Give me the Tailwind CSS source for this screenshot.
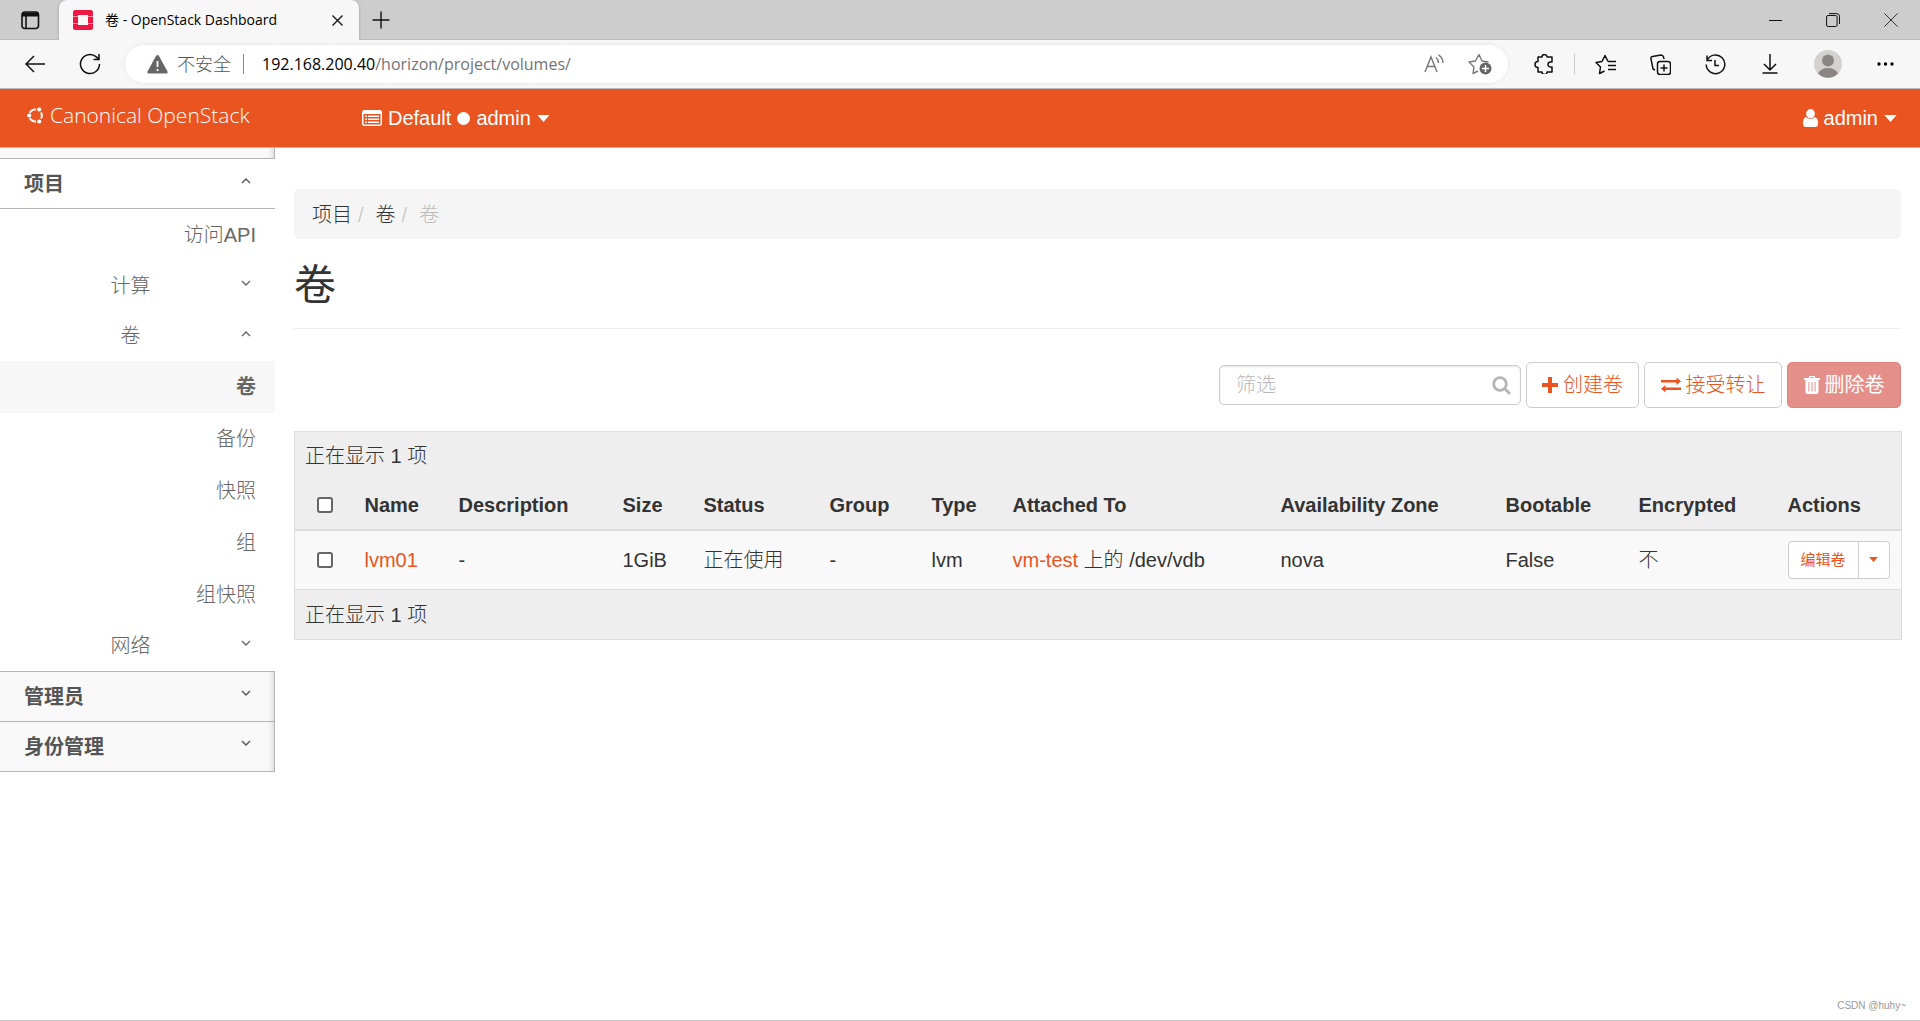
<!DOCTYPE html>
<html lang="zh-CN">
<head>
<meta charset="utf-8">
<meta name="viewport" content="width=device-width, initial-scale=1">
<title>卷 - OpenStack Dashboard</title>
<script src="https://cdn.jsdelivr.net/npm/@tailwindcss/browser@4"></script>
</head>
<body class="flex min-h-screen flex-col border-b border-[#c8c8c8] bg-white font-['Liberation_Sans','Noto_Sans_CJK_SC',sans-serif] text-xl font-light text-[#333]">

<!-- Shared symbols -->
<svg class="hidden" aria-hidden="true">
  <symbol id="caret" viewBox="0 0 14 8"><path d="M0 0h14L7 8z" fill="currentColor"/></symbol>
  <symbol id="down" viewBox="0 0 10 7"><path d="M1 1l4 4 4-4" fill="none" stroke="currentColor" stroke-width="1.4"/></symbol>
  <symbol id="up" viewBox="0 0 10 7"><path d="M1 6l4-4 4 4" fill="none" stroke="currentColor" stroke-width="1.4"/></symbol>
</svg>

<!-- Browser chrome -->
<div class="font-['Open_Sans','Noto_Sans_CJK_SC',sans-serif] font-normal text-black">
  <div class="flex h-10 items-center bg-[#cdcdcd]">
    <button class="flex h-10 w-[59px] items-center justify-center border-b border-[#bdbdbd]" aria-label="标签页操作菜单">
      <svg class="size-5" viewBox="0 0 20 20" fill="none" stroke="#111" stroke-width="1.6"><rect x="2" y="2" width="16.500" height="16.500" rx="3"/><path d="M2 4.500h16.500" stroke-width="4"/><path d="M6 6v12"/></svg>
    </button>
    <div class="flex h-10 w-[300px] items-center rounded-t-lg bg-[#f7f7f7] pr-3 pl-[14px] shadow-[0_0_3px_rgba(0,0,0,0.25)] [clip-path:inset(0_-4px_0_-4px)]">
      <svg class="size-5" viewBox="0 0 20 20"><path fill="#ed1944" d="M1.500 0h17L20 1.500V6h-5V5H5v1H0V1.500zM0 7h5v6H0zM15 7h5v6h-5zM0 14h5v1h10v-1h5v4.500L18.500 20h-17L0 18.500z"/><path fill="#f58aa0" d="M0 6h5v1H0zM15 6h5v1h-5zM0 13h5v1H0zM15 13h5v1h-5z"/></svg>
      <span class="ml-3 flex-1 text-sm whitespace-nowrap">卷 - OpenStack Dashboard</span>
      <button class="flex size-5 items-center justify-center" aria-label="关闭标签页"><svg class="size-[11px]" viewBox="0 0 11 11" stroke="#111" stroke-width="1.300"><path d="M.5.5l10 10M10.500.5l-10 10"/></svg></button>
    </div>
    <div class="flex h-10 flex-1 items-center justify-between border-b border-[#bdbdbd]">
      <button class="ml-3 p-px" aria-label="新建标签页"><svg class="size-[18px]" viewBox="0 0 18 18" stroke="#111" stroke-width="1.400"><path d="M9 .5v17M.5 9h17"/></svg></button>
      <div class="flex items-center gap-[44px] pr-[22px]">
        <button aria-label="最小化"><svg class="size-[14px]" viewBox="0 0 14 14" stroke="#111"><path d="M1 7.500h13"/></svg></button>
        <button aria-label="还原"><svg class="size-[14px]" viewBox="0 0 14 14" fill="none" stroke="#111"><rect x=".6" y="2.500" width="10.500" height="11" rx="1.500"/><path d="M3 .6h7.500a3 3 0 013 3V11"/></svg></button>
        <button aria-label="关闭"><svg class="size-[14px]" viewBox="0 0 14 14" stroke="#333"><path d="M.5.5l13 13M13.500.5l-13 13"/></svg></button>
      </div>
    </div>
  </div>
  <div class="flex h-[49px] items-center border-b border-[#b9b9b9] bg-[#f7f7f7] pl-[25px]">
    <button aria-label="返回"><svg class="h-[18px] w-[21px]" viewBox="0 0 21 18" fill="none" stroke="#111" stroke-width="1.500"><path d="M20 9H1M9 1L1 9l8 8"/></svg></button>
    <button class="ml-[33px]" aria-label="刷新"><svg class="size-[22px]" viewBox="0 0 22 22" fill="none" stroke="#111" stroke-width="1.500"><path d="M20.500 11a9.500 9.500 0 11-3.200-7.100L19.500 6M20 1v5.500h-5.500"/></svg></button>
    <div class="ml-6 flex h-[38px] flex-1 items-center rounded-full bg-white pr-4 pl-[22px] shadow-[0_0_4px_rgba(0,0,0,0.08)]">
      <svg class="h-[19px] w-[21px]" viewBox="0 0 21 19"><path fill="#666" d="M9 1q1.500-2 3 0l8.500 15.500q.6 2-1.200 2H1.700q-1.800 0-1.200-2z"/><path stroke="#fff" stroke-width="1.800" d="M10.500 6v6M10.500 14v2"/></svg>
      <span class="ml-[9px] text-lg font-light text-[#555]">不安全</span>
      <span class="ml-3 h-5 w-px bg-[#888]"></span>
      <span class="ml-[18px] flex-1 text-base">192.168.200.40<span class="text-[#747474]">/horizon/project/volumes/</span></span>
      <button aria-label="朗读此页内容"><svg class="size-5" viewBox="0 0 20 20" fill="none" stroke="#777" stroke-width="1.400"><path d="M1 18L7 3l6 15M3.300 12.500h7.400M12 3.500a7 7 0 012.500 5.500M14.500.8A10 10 0 0119 9"/></svg></button>
      <button class="ml-6" aria-label="收藏此页"><svg class="h-[22px] w-6" viewBox="0 0 24 22" fill="none"><path d="M10 18l-5 2.500 1-6.500-5-5 6.500-1L11 1.500 14 8l6.500 1" stroke="#777" stroke-width="1.400" stroke-linejoin="round"/><circle cx="17.500" cy="15.500" r="6" fill="#666"/><path d="M17.500 12v7M14 15.500h7" stroke="#fff" stroke-width="1.500"/></svg></button>
    </div>
    <div class="flex items-center pr-[26px] pl-[26px]">
      <button aria-label="扩展"><svg class="size-5" viewBox="0 0 20 20" fill="none" stroke="#111" stroke-width="1.500" stroke-linejoin="round"><path d="M4 3h4a2.500 2.500 0 015 0h5v5h-1.500a2.500 2.500 0 000 5H18v5h-5a2.500 2.500 0 01-5 0H4v-4.500a2.700 2.700 0 010-6z"/></svg></button>
      <span class="ml-5 h-5 w-px bg-[#c8c8c8]"></span>
      <button class="ml-5" aria-label="收藏夹"><svg class="size-[21px]" viewBox="0 0 21 21" fill="none" stroke="#111" stroke-width="1.500" stroke-linejoin="round"><path d="M9.500 17L4.500 19.500l1-6.500L1 8.500 7 7.500 10 1.500l3 6M13 7.500h8M13 11.500h8M13 15.500h8"/></svg></button>
      <button class="ml-[34px]" aria-label="集锦"><svg class="size-[21px]" viewBox="0 0 21 21" fill="none" stroke="#111" stroke-width="1.500"><rect x="7.500" y="7.500" width="13" height="13" rx="2.500"/><path d="M14 10.500v7M10.500 14h7M5 16l-2-1L1 5q-.5-2 1.500-2.500L11 1q2 0 2.500 2l.5 2"/></svg></button>
      <button class="ml-[34px]" aria-label="历史记录"><svg class="size-[21px]" viewBox="0 0 21 21" fill="none" stroke="#111" stroke-width="1.500"><path d="M2 6.500a9.300 9.300 0 11-.8 4M2 1.500v5h5M10 6v5.500h4"/></svg></button>
      <button class="ml-[36px]" aria-label="下载"><svg class="h-5 w-4" viewBox="0 0 16 20" fill="none" stroke="#111" stroke-width="1.500"><path d="M8 0v16M2 10l6 6 6-6M.5 19h15"/></svg></button>
      <button class="ml-9" aria-label="个人"><svg class="size-7" viewBox="0 0 28 28"><circle cx="14" cy="14" r="14" fill="#d4d2cf"/><circle cx="14" cy="10.500" r="6" fill="#8b8683"/><path fill="#8b8683" d="M4 23.500q3-5.500 10-5.500t10 5.500A14 14 0 014 23.500z"/></svg></button>
      <button class="ml-[35px]" aria-label="设置及其他"><svg class="h-1 w-[17px]" viewBox="0 0 17 4"><circle cx="2" cy="2" r="1.700"/><circle cx="8.500" cy="2" r="1.700"/><circle cx="15" cy="2" r="1.700"/></svg></button>
    </div>
  </div>
</div>

<!-- Dashboard top bar -->
<header class="flex h-[59px] items-center justify-between border-b border-[#bbb] bg-[#e95420] text-white">
  <div class="flex items-center">
    <a href="#" class="flex w-[335px] items-center gap-[6px] pb-[6px] pl-[27px] font-['Open_Sans',sans-serif] text-[21px] leading-7 whitespace-nowrap">
      <svg class="size-[17px]" viewBox="0 0 17 17" fill="none" stroke="#fff" stroke-width="2"><path d="M4 4.200A6 6 0 019 2.600M14 5.500a6 6 0 010 6M4 12.800a6 6 0 005 1.600"/><path d="M4 4.200A6 6 0 003 6M4 12.800A6 6 0 013 11"/><g fill="#fff" stroke="none"><circle cx="2.200" cy="8.500" r="2.100"/><circle cx="12.200" cy="2.500" r="2.100"/><circle cx="12.200" cy="14.500" r="2.100"/></g></svg>
      Canonical OpenStack
    </a>
    <button class="flex items-center gap-[6px] pl-[27px]">
      <svg class="h-4 w-5" viewBox="0 0 20 16"><path fill="#fff" fill-rule="evenodd" d="M1.500 0h17L20 1.500v13L18.500 16h-17L0 14.500v-13zM1.500 4v10.500h17V4z"/><path stroke="#fff" stroke-width="1.400" d="M3 6.300h2M6 6.300h11M3 9.300h2M6 9.300h11M3 12.300h2M6 12.300h11"/></svg>
      Default
      <span class="size-[13px] rounded-full bg-white"></span>
      admin
      <svg class="h-[7px] w-[13px]"><use href="#caret"/></svg>
    </button>
  </div>
  <button class="flex items-center gap-[6px] pr-[23px]">
    <svg class="h-[18px] w-[15px]" viewBox="0 0 15 18" fill="#fff"><ellipse cx="7.500" cy="4.700" rx="4.400" ry="4.700"/><path d="M3 8q4.500 4 9 0 3 1 3 6.500Q15 18 12 18H3q-3 0-3-3.500Q0 9 3 8z"/></svg>
    admin
    <svg class="h-[7px] w-[13px]"><use href="#caret"/></svg>
  </button>
</header>

<div class="flex flex-1 items-start">
  <!-- Side navigation -->
  <nav class="w-[275px] shrink-0 text-[#666]">
    <div class="h-[11px] border-r border-b border-[#b5b5b5] bg-[#f9f9f9] shadow-[inset_-5px_0_5px_-3px_rgba(0,0,0,0.12)]"></div>
    <a href="#" class="flex h-[50px] items-center justify-between border-b border-[#b5b5b5] pr-6 pl-6 font-bold text-[#555]">项目<svg class="mb-[6px] h-[7px] w-[10px]"><use href="#up"/></svg></a>
    <a href="#" class="flex h-[52px] items-center justify-end pr-[19px]">访问API</a>
    <a href="#" class="grid h-[50px] grid-cols-[1fr_40px_1fr] items-center pr-6 pl-[10px]"><span class="col-start-2 text-center">计算</span><svg class="mb-[6px] h-[7px] w-[10px] justify-self-end"><use href="#down"/></svg></a>
    <a href="#" class="grid h-[50px] grid-cols-[1fr_40px_1fr] items-center pr-6 pl-[10px]"><span class="col-start-2 text-center">卷</span><svg class="mb-[6px] h-[7px] w-[10px] justify-self-end"><use href="#up"/></svg></a>
    <a href="#" class="flex h-[52px] items-center justify-end bg-[#f7f7f7] pr-[19px] font-bold">卷</a>
    <a href="#" class="flex h-[52px] items-center justify-end pr-[19px]">备份</a>
    <a href="#" class="flex h-[52px] items-center justify-end pr-[19px]">快照</a>
    <a href="#" class="flex h-[52px] items-center justify-end pr-[19px]">组</a>
    <a href="#" class="flex h-[52px] items-center justify-end pr-[19px]">组快照</a>
    <a href="#" class="grid h-[50px] grid-cols-[1fr_40px_1fr] items-center pr-6 pl-[10px]"><span class="col-start-2 text-center">网络</span><svg class="mb-[6px] h-[7px] w-[10px] justify-self-end"><use href="#down"/></svg></a>
    <a href="#" class="flex h-[50px] items-center justify-between border-t border-r border-[#b5b5b5] bg-[#f9f9f9] pr-[23px] pl-6 font-bold text-[#555] shadow-[inset_-5px_0_5px_-3px_rgba(0,0,0,0.12)]">管理员<svg class="mb-[6px] h-[7px] w-[10px]"><use href="#down"/></svg></a>
    <a href="#" class="flex h-[51px] items-center justify-between border-y border-r border-[#b5b5b5] bg-[#f9f9f9] pr-[23px] pl-6 font-bold text-[#555] shadow-[inset_-5px_0_5px_-3px_rgba(0,0,0,0.12)]">身份管理<svg class="mb-[6px] h-[7px] w-[10px]"><use href="#down"/></svg></a>
  </nav>

  <main class="min-w-0 flex-1 pt-[41px] pr-[19px] pl-[19px]">
    <ol class="flex h-[50px] items-center rounded-[5px] bg-[#f5f5f5] px-[18px] pt-[2px]">
      <li><a href="#">项目</a><span class="pr-3 pl-[6px] text-[#ccc]">/</span></li>
      <li><a href="#">卷</a><span class="pr-3 pl-[6px] text-[#ccc]">/</span></li>
      <li class="text-[#bbb]">卷</li>
    </ol>
    <h1 class="mt-[22px] border-b border-[#eee] pb-[18px] text-[42px] leading-[49px] font-normal">卷</h1>

    <div class="mt-[33px] flex items-center justify-end gap-[5px] text-[#e95420]">
      <div class="relative flex w-[302px] items-center">
        <input type="text" aria-label="筛选" placeholder="筛选" class="h-10 w-full rounded-[5px] border border-[#ccc] bg-white pr-10 pl-4 shadow-[inset_0_1px_2px_rgba(0,0,0,0.1)] placeholder:text-[#b8b8b8]">
        <svg class="absolute right-[10px] size-[19px]" viewBox="0 0 19 19" fill="none" stroke="#b5b5b5" stroke-width="2.800"><circle cx="8" cy="8" r="6.300"/><path d="M12.500 12.500l5.500 5.500"/></svg>
      </div>
      <button class="flex h-[46px] w-[113px] items-center justify-center gap-[5px] rounded-[5px] border border-[#ccc] bg-white"><svg class="size-4" viewBox="0 0 16 16" stroke="currentColor" stroke-width="4"><path d="M8 0v16M0 8h16"/></svg>创建卷</button>
      <button class="flex h-[46px] w-[138px] items-center justify-center gap-[5px] rounded-[5px] border border-[#ccc] bg-white"><svg class="h-4 w-5" viewBox="0 0 20 16" fill="currentColor"><path d="M0 3h15.500V0.500L20 4.300l-4.500 3.800V5.600H0zM20 10.400H4.500V7.900L0 11.700l4.500 3.800V13H20z"/></svg>接受转让</button>
      <button class="flex h-[46px] w-[114px] items-center justify-center gap-[5px] rounded-[5px] border border-[#e08480] bg-[#e58f8b] font-normal text-white" disabled><svg class="h-[18px] w-4" viewBox="0 0 16 18" fill="#fff"><path fill-rule="evenodd" d="M4.500 2l1-2h5l1 2H16v2h-1.500v12q0 2-2 2h-9q-2 0-2-2V4H0V2zM6.300 2h3.400l-.5-1H6.800zM4.400 6v9.500h1V6zm3.100 0v9.500h1V6zm3.100 0v9.500h1V6z"/></svg>删除卷</button>
    </div>

    <table class="mt-[23px] w-full table-fixed border-collapse border border-[#ddd] text-left">
      <colgroup>
        <col class="w-[60px]"><col class="w-[94px]"><col class="w-[164px]"><col class="w-[81px]"><col class="w-[126px]"><col class="w-[102px]"><col class="w-[81px]"><col class="w-[268px]"><col class="w-[225px]"><col class="w-[133px]"><col class="w-[149px]"><col class="w-[124px]">
      </colgroup>
      <thead class="bg-[#eee]">
        <tr class="h-[49px]"><td colspan="12" class="px-[10px]">正在显示 1 项</td></tr>
        <tr class="h-[49px] border-b-2 border-[#ddd] whitespace-nowrap">
          <th class="pl-[22px]"><input type="checkbox" aria-label="全选" class="block size-4 appearance-none rounded-[3px] border-2 border-[#666] bg-white"></th>
          <th class="px-[10px]">Name</th><th class="px-[10px]">Description</th><th class="px-[10px]">Size</th><th class="px-[10px]">Status</th><th class="px-[10px]">Group</th><th class="px-[10px]">Type</th><th class="px-[10px]">Attached To</th><th class="px-[10px]">Availability Zone</th><th class="px-[10px]">Bootable</th><th class="px-[10px]">Encrypted</th><th class="px-[10px]">Actions</th>
        </tr>
      </thead>
      <tbody class="bg-[#f9f9f9]">
        <tr class="h-[60px] border-b border-[#ddd] whitespace-nowrap">
          <td class="pl-[22px]"><input type="checkbox" aria-label="选择 lvm01" class="block size-4 appearance-none rounded-[3px] border-2 border-[#666] bg-white"></td>
          <td class="px-[10px]"><a href="#" class="text-[#e95420]">lvm01</a></td>
          <td class="px-[10px]">-</td><td class="px-[10px]">1GiB</td><td class="px-[10px]">正在使用</td><td class="px-[10px]">-</td><td class="px-[10px]">lvm</td>
          <td class="px-[10px]"><a href="#" class="text-[#e95420]">vm-test</a> 上的 /dev/vdb</td>
          <td class="px-[10px]">nova</td><td class="px-[10px]">False</td><td class="px-[10px]">不</td>
          <td class="px-[10px]">
            <div class="flex h-[38px] w-[102px] rounded-[4px] border border-[#ccc] bg-white text-[15px] font-normal text-[#e95420]">
              <button class="flex-1">编辑卷</button>
              <button class="flex w-[31px] items-center justify-center border-l border-[#ccc]" aria-label="更多操作"><svg class="h-[5px] w-[9px]"><use href="#caret"/></svg></button>
            </div>
          </td>
        </tr>
      </tbody>
      <tfoot class="bg-[#eee]">
        <tr class="h-[50px]"><td colspan="12" class="px-[10px]">正在显示 1 项</td></tr>
      </tfoot>
    </table>
  </main>
</div>
<footer class="pr-[14px] pb-[6px] text-right text-[10px] leading-4 text-[#999]">CSDN @huhy~</footer>
</body>
</html>
